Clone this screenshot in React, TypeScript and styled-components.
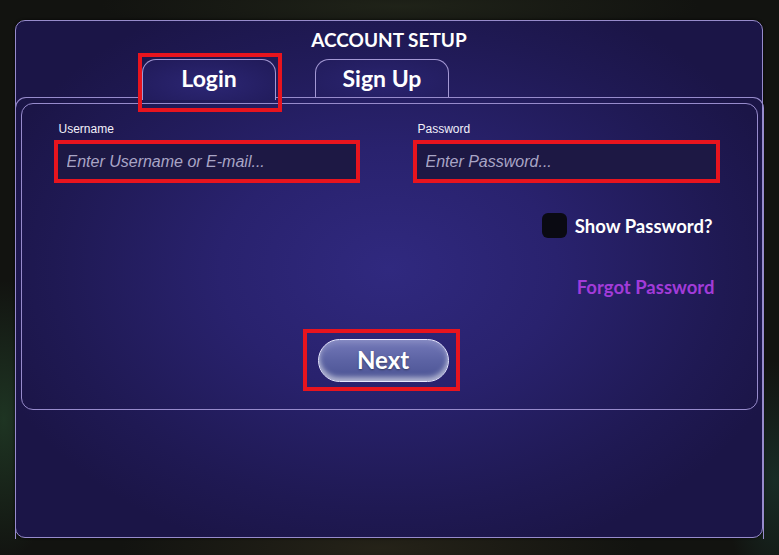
import styled, { createGlobalStyle } from "styled-components";

const GlobalStyle = createGlobalStyle`
  html, body {
    margin: 0;
    padding: 0;
    background: #0f100c;
  }
  * {
    box-sizing: border-box;
  }
`;

function App() {
  return (
    <>
      <GlobalStyle />
      <Page>
        <Panel>
          <Title>ACCOUNT SETUP</Title>
          <TabRow>
            <Tab $active $marked>
              Login
            </Tab>
            <Tab>Sign Up</Tab>
          </TabRow>
          <Body>
            <Frame>
              <Fields>
                <Field>
                  <Label>Username</Label>
                  <Input placeholder="Enter Username or E-mail..." />
                </Field>
                <Field>
                  <Label>Password</Label>
                  <Input type="password" placeholder="Enter Password..." />
                </Field>
              </Fields>
              <CheckRow>
                <CheckBox />
                <CheckText>Show Password?</CheckText>
              </CheckRow>
              <ForgotRow>
                <Forgot>Forgot Password</Forgot>
              </ForgotRow>
              <NextRow>
                <Marker>
                  <NextButton>Next</NextButton>
                </Marker>
              </NextRow>
            </Frame>
          </Body>
        </Panel>
      </Page>
    </>
  );
}

const Page = styled.div`
  width: 779px;
  height: 555px;
  padding: 20px 16px 17px 15px;
  display: flex;
  background:
    radial-gradient(ellipse 60px 140px at 4px 420px, rgba(40, 80, 50, 0.55), transparent),
    radial-gradient(ellipse 50px 120px at 775px 480px, rgba(30, 70, 60, 0.5), transparent),
    radial-gradient(ellipse 260px 40px at 380px 548px, rgba(50, 45, 30, 0.6), transparent),
    radial-gradient(ellipse 300px 30px at 400px 6px, rgba(40, 45, 30, 0.6), transparent),
    #121310;
`;

const Panel = styled.div`
  flex: 1;
  display: flex;
  flex-direction: column;
  border: 1.5px solid #978bcc;
  border-radius: 10px;
  box-shadow: 0 0 3px rgba(0, 0, 0, 0.8);
  background: radial-gradient(
    ellipse 420px 300px at 50% 48%,
    #30297f 0%,
    #29226e 40%,
    #1f1953 80%,
    #1b1547 100%
  );
  font-family: "Lato", "Open Sans", sans-serif;
  color: #fff;
`;

const Title = styled.div`
  text-align: center;
  font-size: 19px;
  line-height: 20px;
  font-weight: 700;
  padding-top: 9px;
`;

const TabRow = styled.div`
  display: flex;
  gap: 39px;
  padding-left: 126px;
  margin-top: 9px;
  height: 38px;
  position: relative;
  z-index: 1;
`;

const Tab = styled.div<{ $active?: boolean; $marked?: boolean }>`
  position: relative;
  width: 134px;
  height: ${(p) => (p.$active ? "41px" : "38px")};
  display: flex;
  align-items: center;
  justify-content: center;
  padding-bottom: ${(p) => (p.$active ? "4px" : "2px")};
  font-size: 23px;
  font-weight: 700;
  border: 1.5px solid #a398d4;
  border-bottom: none;
  border-radius: 14px 14px 0 0;
  background: ${(p) =>
    p.$active
      ? "radial-gradient(ellipse at 50% 60%, #2c2674 0%, #201a58 100%)"
      : "radial-gradient(ellipse at 50% 60%, #2a2470 0%, #221c5c 100%)"};

  &::after {
    content: "";
    display: ${(p) => (p.$marked ? "block" : "none")};
    position: absolute;
    top: -7px;
    left: -5px;
    right: -7px;
    bottom: -12px;
    border: 4px solid #e8141e;
  }
`;

const Body = styled.div`
  flex: 1;
  margin: 0 -1.5px -1.5px;
  border: 1.5px solid #978bcc;
  border-bottom: none;
  border-radius: 11px 11px 0 0;
  padding: 5px 5px 0 5px;
`;

const Frame = styled.div`
  border: 1.5px solid #978bcc;
  border-radius: 12px;
  padding: 18px 32px 18px 32px;
  display: flex;
  flex-direction: column;
`;

const Fields = styled.div`
  display: grid;
  grid-template-columns: 306px 307px;
  column-gap: 53px;
`;

const Field = styled.div`
  display: flex;
  flex-direction: column;
`;

const Label = styled.label`
  font-family: "Liberation Sans", Arial, sans-serif;
  font-size: 12px;
  line-height: 14px;
  color: #f2f0fa;
  padding-left: 5px;
  margin-bottom: 4px;
`;

const Input = styled.input`
  height: 43px;
  border: 4px solid #e8141e;
  background: #1d1844;
  color: #fff;
  padding: 0 9px;
  font-family: "Liberation Sans", Arial, sans-serif;
  font-size: 16px;
  font-style: italic;
  outline: none;

  &::placeholder {
    color: #a9a5c6;
  }
`;

const CheckRow = styled.div`
  display: flex;
  align-items: center;
  justify-content: flex-end;
  gap: 8px;
  margin-top: 30px;
  padding-right: 12px;
`;

const CheckBox = styled.div`
  width: 25px;
  height: 25px;
  border-radius: 6px;
  background: #0a0a12;
`;

const CheckText = styled.span`
  font-size: 18.5px;
  font-weight: 700;
`;

const ForgotRow = styled.div`
  display: flex;
  justify-content: flex-end;
  margin-top: 38px;
  padding-right: 10px;
`;

const Forgot = styled.span`
  font-size: 18.5px;
  line-height: 22px;
  font-weight: 700;
  color: #a23bd9;
`;

const NextRow = styled.div`
  display: flex;
  justify-content: center;
  margin-top: 31px;
  padding-right: 16px;
`;

const Marker = styled.div`
  border: 4px solid #e8141e;
  padding: 6px 7px 5px 11px;
`;

const NextButton = styled.button`
  width: 131px;
  height: 43px;
  border-radius: 22px;
  border: 1.5px solid #e8e8ff;
  background: linear-gradient(180deg, #7479b9 0%, #5c63a4 50%, #4a5293 100%);
  box-shadow: inset 0 -4px 5px rgba(255, 255, 255, 0.55),
    inset 0 3px 6px rgba(255, 255, 255, 0.15);
  color: #fff;
  font-family: "Lato", "Open Sans", sans-serif;
  font-size: 24px;
  font-weight: 700;
  text-shadow: 0 1px 2px rgba(0, 0, 0, 0.4);
  padding: 0 0 2px;
`;

export default App;
